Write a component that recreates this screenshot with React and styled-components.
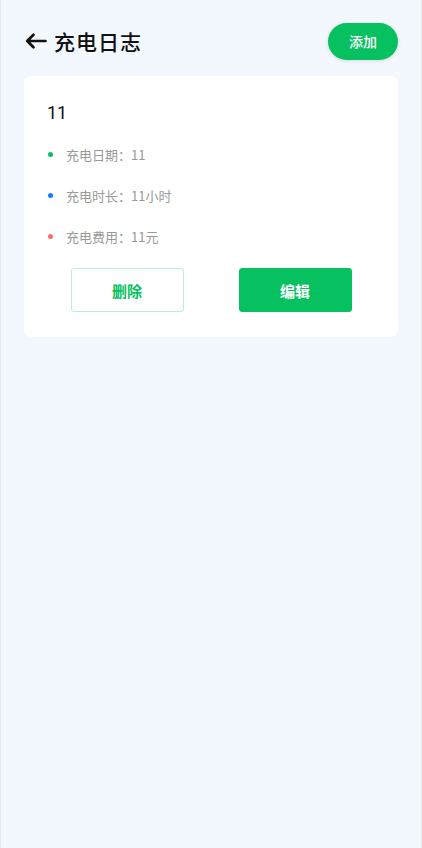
import React from "react";
import styled, { createGlobalStyle } from "styled-components";

const GlobalStyle = createGlobalStyle`
  html, body {
    margin: 0;
    padding: 0;
    background: #f3f7fe;
  }
  body {
    font-family: "Noto Sans CJK SC", "Noto Sans", sans-serif;
  }
`;

const Page = styled.div`
  box-sizing: border-box;
  min-height: 848px;
  background: #f3f7fe;
  border-left: 1px solid #e6e9ee;
  border-right: 1px solid #e6e9ee;
  padding: 22px 23px 0 23px;
`;

const Header = styled.div`
  display: flex;
  align-items: center;
  justify-content: space-between;
  height: 38px;
  margin-bottom: 16px;
`;

const TitleGroup = styled.div`
  display: flex;
  align-items: center;
  gap: 7px;
  color: #111;
`;

const Title = styled.h1`
  margin: 0;
  font-size: 21px;
  font-weight: 500;
  letter-spacing: 1px;
  line-height: 1;
`;

const AddButton = styled.button`
  width: 70px;
  height: 37px;
  border: none;
  border-radius: 19px;
  background: #07c160;
  color: #fff;
  font-family: inherit;
  font-size: 14px;
  font-weight: 500;
  box-shadow: 0 1px 4px rgba(0, 0, 0, 0.12);
`;

const Card = styled.div`
  background: #fff;
  border-radius: 7px;
  padding: 24px 23px 25px 23px;
`;

const CardTitle = styled.div`
  font-family: "Roboto", "Noto Sans", sans-serif;
  font-size: 18px;
  font-weight: 400;
  color: #111;
  line-height: 26px;
  margin-bottom: 8px;
`;

const InfoRow = styled.div`
  display: flex;
  align-items: center;
  height: 41px;
  font-size: 13px;
  color: #999;
`;

const Dot = styled.span`
  width: 5px;
  height: 5px;
  border-radius: 50%;
  background: ${(p) => p.color};
  margin: 0 13px 0 1px;
`;

const Actions = styled.div`
  display: flex;
  justify-content: center;
  gap: 55px;
  margin-top: 11px;
`;

const ActionButton = styled.button`
  box-sizing: border-box;
  width: 113px;
  height: 44px;
  border-radius: 3px;
  font-family: inherit;
  font-size: 15px;
  font-weight: 700;
  border: 1px solid ${(p) => (p.primary ? "#07c160" : "#b9efcf")};
  background: ${(p) => (p.primary ? "#07c160" : "#fff")};
  color: ${(p) => (p.primary ? "#fff" : "#07c160")};
`;

const BackArrow = () => (
  <svg width="23" height="18" viewBox="0 0 23 18" fill="none">
    <path
      d="M21.5 9H3.5M9.5 2.8L3.2 9l6.3 6.2"
      stroke="#111"
      strokeWidth="2.7"
      strokeLinecap="round"
      strokeLinejoin="round"
    />
  </svg>
);

const rows = [
  { color: "#07c160", text: "充电日期：11" },
  { color: "#1677ff", text: "充电时长：11小时" },
  { color: "#ff6b6b", text: "充电费用：11元" },
];

export default function App() {
  return (
    <>
      <GlobalStyle />
      <Page>
        <Header>
          <TitleGroup>
            <BackArrow />
            <Title>充电日志</Title>
          </TitleGroup>
          <AddButton>添加</AddButton>
        </Header>
        <Card>
          <CardTitle>11</CardTitle>
          {rows.map((r) => (
            <InfoRow key={r.text}>
              <Dot color={r.color} />
              {r.text}
            </InfoRow>
          ))}
          <Actions>
            <ActionButton>删除</ActionButton>
            <ActionButton primary>编辑</ActionButton>
          </Actions>
        </Card>
      </Page>
    </>
  );
}
